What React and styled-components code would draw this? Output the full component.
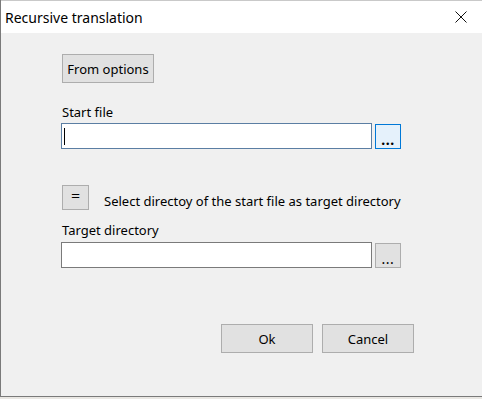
import React from "react";
import styled, { createGlobalStyle } from "styled-components";

const Global = createGlobalStyle`
  html, body { margin: 0; padding: 0; background: #e9e7e3; }
  body { font-family: "Segoe UI", "Noto Sans", sans-serif; }
  #root { width: 482px; height: 399px; overflow: hidden; }
`;

const Window = styled.div`
  width: 490px;
  height: 396px;
  background: #f0f0f0;
  border-left: 1px solid #7a7a7a;
  border-bottom: 1px solid #7a7a7a;
  display: flex;
  flex-direction: column;
`;

const TitleBar = styled.div`
  height: 33px;
  background: #ffffff;
  border-top: 1px solid #c9c9c9;
  box-sizing: border-box;
  display: flex;
  align-items: center;
  justify-content: space-between;
  padding-left: 4px;
  width: 481px;
`;

const Title = styled.div`
  font-size: 14px;
  color: #000;
  line-height: 18px;
  margin-top: 1px;
`;

const Close = styled.div`
  width: 12px;
  height: 12px;
  margin-right: 15px;
  display: flex;
`;

const Content = styled.div`
  padding: 21px 0 0 60px;
  width: 353px;
  display: flex;
  flex-direction: column;
  font-size: 13px;
  color: #000;
`;

const Button = styled.button`
  font-family: inherit;
  font-size: 13px;
  color: #000;
  background: ${(p) => (p.$focus ? "#e5f1fb" : "#e1e1e1")};
  border: 1px solid ${(p) => (p.$focus ? "#0078d7" : "#adadad")};
  width: ${(p) => p.$w}px;
  height: ${(p) => p.$h}px;
  padding: 0;
  margin: 0;
  box-sizing: border-box;
  display: flex;
  align-items: center;
  justify-content: center;
  flex: none;
`;

const Dots = styled.span`
  font-weight: ${(p) => (p.$bold ? 700 : 400)};
  font-size: 14px;
  line-height: 1;
  margin-top: 6px;
  letter-spacing: 0.5px;
`;

const Label = styled.div`
  line-height: 16px;
  margin-top: ${(p) => p.$mt}px;
  margin-bottom: ${(p) => p.$mb}px;
  padding-left: 1px;
`;

const Row = styled.div`
  display: flex;
  align-items: ${(p) => p.$align || "flex-start"};
  gap: ${(p) => p.$gap}px;
  margin-top: ${(p) => p.$mt || 0}px;
`;

const TextBox = styled.div`
  width: 311px;
  height: 26px;
  box-sizing: border-box;
  background: #fff;
  border: 1px solid ${(p) => (p.$focus ? "#5b7ea3" : "#7a7a7a")};
  display: flex;
  align-items: center;
  padding-left: 2px;
  flex: none;
`;

const Caret = styled.div`
  width: 1px;
  height: 17px;
  background: #000;
`;

const Browse = styled.div`
  padding-top: 1px;
`;

const EqButton = styled(Button)`
  margin-left: 1px;
  font-size: 16px;
  font-weight: 300;
  padding-bottom: 3px;
`;

const InlineText = styled.div`
  line-height: 16px;
  padding-bottom: 1px;
`;

const Footer = styled.div`
  display: flex;
  justify-content: flex-end;
  gap: 9px;
  margin-top: 56px;
`;

export default function App() {
  return (
    <>
      <Global />
      <Window>
        <TitleBar>
          <Title>Recursive translation</Title>
          <Close>
            <svg width="12" height="12" viewBox="0 0 12 12">
              <path d="M0.5 0.5 L11.5 11.5 M11.5 0.5 L0.5 11.5" stroke="#111" strokeWidth="1" fill="none" />
            </svg>
          </Close>
        </TitleBar>
        <Content>
          <Row>
            <Button $w={92} $h={29} style={{ marginLeft: 1 }}>From options</Button>
          </Row>
          <Label $mt={21} $mb={3}>Start file</Label>
          <Row $gap={3}>
            <TextBox $focus>
              <Caret />
            </TextBox>
            <Browse>
              <Button $w={26} $h={25} $focus>
                <Dots $bold>...</Dots>
              </Button>
            </Browse>
          </Row>
          <Row $mt={36} $gap={15} $align="flex-end">
            <EqButton $w={27} $h={25}>=</EqButton>
            <InlineText>Select directoy of the start file as target directory</InlineText>
          </Row>
          <Label $mt={12} $mb={4}>Target directory</Label>
          <Row $gap={3}>
            <TextBox />
            <Browse>
              <Button $w={26} $h={25}>
                <Dots>...</Dots>
              </Button>
            </Browse>
          </Row>
          <Footer>
            <Button $w={92} $h={29}>Ok</Button>
            <Button $w={92} $h={29}>Cancel</Button>
          </Footer>
        </Content>
      </Window>
    </>
  );
}
